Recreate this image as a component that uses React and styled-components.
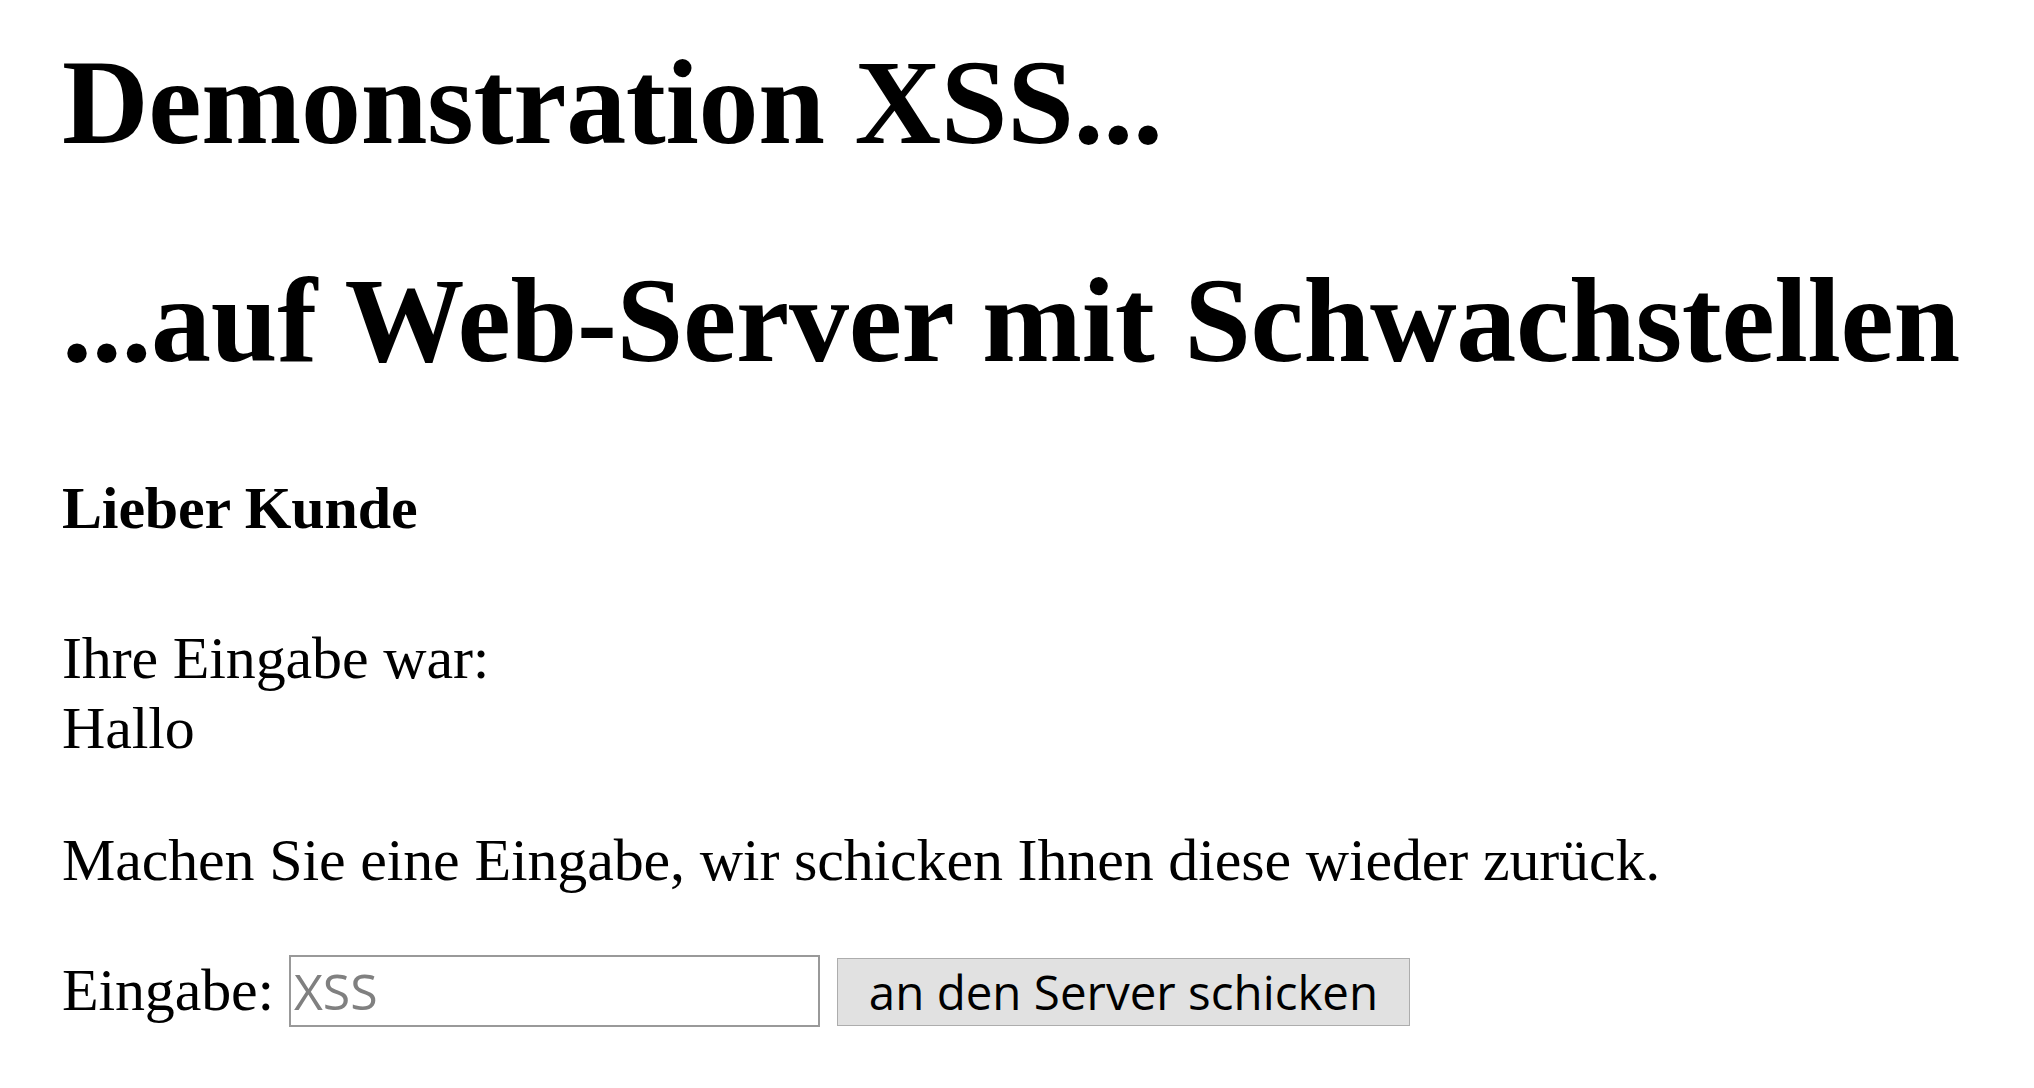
import React from "react";
import styled, { createGlobalStyle } from "styled-components";

const GlobalStyle = createGlobalStyle`
  body {
    margin: 0;
    background: #ffffff;
  }
`;

function App() {
  return (
    <>
      <GlobalStyle />
      <Page>
        <Heading>Demonstration XSS...</Heading>
        <Heading>...auf Web-Server mit Schwachstellen</Heading>
        <Greeting>Lieber Kunde</Greeting>
        <Para>
          Ihre Eingabe war:
          <br />
          Hallo
        </Para>
        <Para $gap={62}>Machen Sie eine Eingabe, wir schicken Ihnen diese wieder zurück.</Para>
        <Form onSubmit={(e) => e.preventDefault()}>
          Eingabe: <TextField type="text" name="eingabe" placeholder="XSS" />{" "}
          <SendButton type="submit">an den Server schicken</SendButton>
        </Form>
      </Page>
    </>
  );
}

export default App;

const Page = styled.main`
  padding: 34px 62px 0;
  font-family: "Liberation Serif", "Times New Roman", serif;
  font-size: 60px;
  letter-spacing: -0.15px;
  color: #000000;
`;

const Heading = styled.h1`
  font-size: 120px;
  font-weight: bold;
  line-height: normal;
  letter-spacing: -0.3px;
  margin: 80px 0;

  &:first-child {
    margin-top: 0;
  }
`;

const Greeting = styled.h4`
  font-size: 60px;
  font-weight: bold;
  line-height: normal;
  margin: 84px 0 80px;
`;

const Para = styled.p`
  line-height: 70px;
  margin: ${(p) => p.$gap || 60}px 0 60px;
`;

const Form = styled.form`
  line-height: 70px;
  margin: 0;
`;

const TextField = styled.input`
  box-sizing: border-box;
  width: 531px;
  height: 72px;
  padding: 0 3px;
  border: 2px solid #999999;
  border-radius: 0;
  background: #ffffff;
  font-family: "Open Sans", "Noto Sans", sans-serif;
  font-size: 50px;
  letter-spacing: normal;
  color: #000000;
  outline: none;

  &::placeholder {
    color: #808080;
  }
`;

const SendButton = styled.button`
  box-sizing: border-box;
  height: 68px;
  margin-left: 2px;
  padding: 0 31px;
  border: 1px solid #adadad;
  border-radius: 0;
  background: #e1e1e1;
  font-family: "Open Sans", "Noto Sans", sans-serif;
  font-size: 47.5px;
  letter-spacing: normal;
  color: #000000;
  cursor: pointer;
`;
